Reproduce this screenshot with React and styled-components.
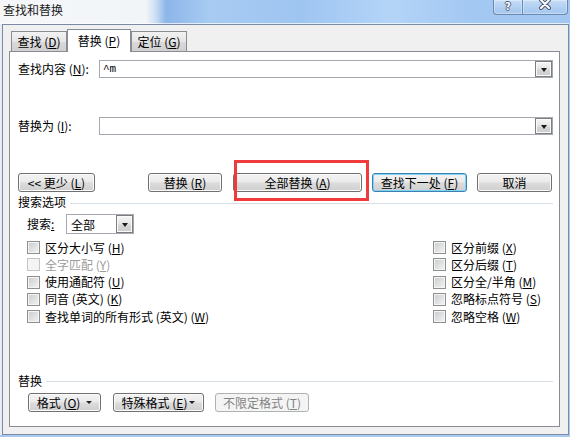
import React from 'react'
import styled, { createGlobalStyle } from 'styled-components'

const GlobalStyle = createGlobalStyle`
  html, body { margin: 0; padding: 0; }
  body {
    background: #a9c9ee;
    font-family: "Noto Sans CJK SC", "Liberation Sans", sans-serif;
    font-size: 12px;
    color: #000;
  }
  u { text-decoration: underline; text-underline-offset: 1px; }
`

const Window = styled.div`
  width: 570px;
  height: 437px;
  overflow: hidden;
  display: flex;
  flex-direction: column;
  background: #a9c9ee;
`

const TitleBar = styled.div`
  height: 24px;
  flex: none;
  display: flex;
  justify-content: space-between;
  align-items: flex-start;
  background: linear-gradient(to right,
    #f5f7f9 0, #f2f5f8 146px, #c9ddf4 156px, #8db6e9 166px, #93bbeb 178px,
    #a8cbf2 210px, #9ec5f1 300px, #b4d4f7 390px, #a3c8f2 470px, #a2c7f1 570px);
`

const Title = styled.div`
  padding: 3px 0 0 3px;
  font-size: 12px;
  line-height: 14px;
  color: #1a1a1a;
`

const Captions = styled.div`
  display: flex;
  margin-right: 2px;
`

const CaptionButton = styled.div`
  box-sizing: border-box;
  width: ${p => p.$w}px;
  height: 15px;
  margin-left: ${p => p.$ml || 0}px;
  border: 1px solid #6a88b0;
  border-top: none;
  border-radius: ${p => p.$r};
  background: linear-gradient(#c6ddf7, #afcdf1 60%, #a6c7ef);
  box-shadow: inset 0 0 0 1px rgba(255, 255, 255, 0.35);
  display: flex;
  justify-content: center;
  align-items: flex-start;
`

const Help = styled.span`
  font-family: "DejaVu Sans", sans-serif;
  font-weight: bold;
  font-size: 10px;
  line-height: 11px;
  margin-top: 1px;
  color: #fff;
  text-shadow: 1px 0 0 #4d5d73, -1px 0 0 #4d5d73, 0 1px 0 #4d5d73, 0 -1px 0 #4d5d73;
`

const Body = styled.div`
  flex: 1;
  margin: 0 1px 2px 2px;
  border: 1px solid #7b8ba3;
  box-shadow: -2px 0 0 #e8edf3, 0 -1px 0 rgba(255, 255, 255, 0.7);
  background: #f0f0f0;
  padding: 4px 8px 7px 6px;
  display: flex;
  flex-direction: column;
`

const TabStrip = styled.div`
  height: 22px;
  flex: none;
  padding-left: 2px;
  display: flex;
  align-items: flex-end;
`

const Tab = styled.div`
  box-sizing: border-box;
  width: ${p => p.$w}px;
  height: ${p => (p.$active ? 23 : 20)}px;
  margin-bottom: ${p => (p.$active ? -1 : 0)}px;
  position: relative;
  z-index: ${p => (p.$active ? 1 : 0)};
  border: 1px solid #898c95;
  border-bottom: none;
  background: ${p => (p.$active ? '#fff' : 'linear-gradient(#f2f2f2, #e6e6e6 50%, #d9d9d9 55%, #d0d0d0)')};
  display: flex;
  justify-content: center;
  padding-top: ${p => (p.$active ? 3 : 2)}px;
  line-height: 16px;
`

const Panel = styled.div`
  flex: 1;
  border: 1px solid #898c95;
  background: #fff;
  padding: 8px 6px 14px 8px;
  display: flex;
  flex-direction: column;
`

const FieldRow = styled.div`
  display: flex;
  align-items: center;
  height: 18px;
  margin-top: ${p => p.$mt || 0}px;
`

const Label = styled.div`
  width: ${p => p.$w}px;
  flex: none;
  line-height: 16px;
`

const Combo = styled.div`
  box-sizing: border-box;
  flex: ${p => (p.$w ? 'none' : 1)};
  width: ${p => (p.$w ? `${p.$w}px` : 'auto')};
  height: ${p => p.$h || 18}px;
  border: 1px solid #a5a9b0;
  background: #fff;
  display: flex;
  align-items: stretch;
`

const ComboText = styled.div`
  flex: 1;
  padding-left: ${p => p.$pl || 3}px;
  display: flex;
  align-items: center;
  font-family: ${p => (p.$mono ? '"Liberation Mono", monospace' : 'inherit')};
  font-size: ${p => (p.$mono ? 11 : 12)}px;
`

const DropButton = styled.div`
  box-sizing: border-box;
  width: 17px;
  flex: none;
  border: 1px solid #7e7e7e;
  background: linear-gradient(#f6f6f6, #e4e4e4 50%, #d6d6d6 55%, #cdcdcd);
  box-shadow: inset 0 0 0 1px #fbfbfb;
  display: flex;
  align-items: center;
  justify-content: center;
  &::after {
    content: '';
    border-left: 3.5px solid transparent;
    border-right: 3.5px solid transparent;
    border-top: 4px solid #1a1a1a;
    margin-top: 1px;
  }
`

const ButtonRow = styled.div`
  display: flex;
  align-items: center;
  height: 19px;
  flex: none;
  margin-top: ${p => p.$mt || 0}px;
  padding-left: ${p => p.$pl || 0}px;
`

const Button = styled.button`
  box-sizing: border-box;
  width: ${p => p.$w}px;
  height: 19px;
  padding: 0;
  margin: 0 0 0 ${p => p.$ml || 0}px;
  font: inherit;
  font-size: 12px;
  line-height: 16px;
  color: #000;
  border: 1px solid ${p => (p.$default ? '#3c7fb1' : '#707070')};
  border-radius: 3px;
  background: linear-gradient(#f3f3f3, #ebebeb 45%, #dcdcdc 52%, #cfcfcf);
  box-shadow: inset 0 0 0 1px ${p => (p.$default ? '#7fd3f4' : '#fbfbfb')};
  display: flex;
  align-items: center;
  justify-content: center;
  &:disabled {
    border-color: #adb2b5;
    background: #f4f4f4;
    color: #838383;
    box-shadow: none;
  }
`

const Caret = styled.span`
  display: inline-block;
  margin-left: ${p => p.$ml}px;
  border-left: 3px solid transparent;
  border-right: 3px solid transparent;
  border-top: 3px solid #222;
`

const Marked = styled.div`
  position: relative;
  flex: none;
  margin-left: ${p => p.$ml || 0}px;
`

const Highlight = styled.div`
  position: absolute;
  left: 1px;
  top: -13px;
  width: 135px;
  height: 41px;
  box-sizing: border-box;
  border: 3px solid #ef3b3b;
  pointer-events: none;
`

const SectionHead = styled.div`
  display: flex;
  align-items: center;
  height: 18px;
  flex: none;
  margin-top: ${p => p.$mt || 0};
  margin-bottom: ${p => p.$mb || 0}px;
  line-height: 16px;
  &::after {
    content: '';
    flex: 1;
    height: 1px;
    margin-left: 4px;
    margin-top: ${p => p.$lineOffset || 0}px;
    background: #d5dfe5;
  }
`

const SearchRow = styled.div`
  display: flex;
  align-items: center;
  height: 20px;
  margin-top: 3px;
  padding-left: 9px;
`

const CheckGrid = styled.div`
  display: grid;
  grid-template-columns: 406px 1fr;
  grid-template-rows: repeat(5, 17.25px);
  grid-auto-flow: column;
  margin-top: 5px;
  padding-left: 9px;
`

const Check = styled.div`
  display: flex;
  align-items: center;
  color: ${p => (p.$disabled ? '#9c9c9c' : '#000')};
  line-height: 16px;
  white-space: pre;
  &::before {
    content: '';
    box-sizing: border-box;
    width: 13px;
    height: 13px;
    flex: none;
    margin-right: 5px;
    border: 1px solid ${p => (p.$disabled ? '#c5c5c5' : '#8e8f8f')};
    background: ${p => (p.$disabled ? '#f4f4f4' : 'linear-gradient(135deg, #c9cbce, #f4f4f4)')};
    box-shadow: inset 0 0 0 1px #f4f4f4;
  }
`

const leftChecks = [
  ['区分大小写', 'H'],
  ['全字匹配', 'Y', true],
  ['使用通配符', 'U'],
  ['同音 (英文)', 'K'],
  ['查找单词的所有形式 (英文)', 'W'],
]

const rightChecks = [
  ['区分前缀', 'X'],
  ['区分后缀', 'T'],
  ['区分全/半角', 'M'],
  ['忽略标点符号', 'S'],
  ['忽略空格', 'W'],
]

const Key = ({ k }) => (
  <> (<u>{k}</u>)</>
)

export default function App() {
  return (
    <Window>
      <GlobalStyle />
      <TitleBar>
        <Title>查找和替换</Title>
        <Captions>
          <CaptionButton $w={30} $r="0 0 0 4px">
            <Help>?</Help>
          </CaptionButton>
          <CaptionButton $w={46} $ml={-1} $r="0 0 4px 0">
            <svg width="12" height="11" viewBox="0 0 12 11">
              <path d="M2 0 L10 8 M10 0 L2 8" stroke="#4d5d73" strokeWidth="4" strokeLinecap="round" />
              <path d="M2 0 L10 8 M10 0 L2 8" stroke="#fff" strokeWidth="2" strokeLinecap="round" />
            </svg>
          </CaptionButton>
        </Captions>
      </TitleBar>

      <Body>
        <TabStrip>
          <Tab $w={56}>查找<Key k="D" /></Tab>
          <Tab $w={64} $active>替换<Key k="P" /></Tab>
          <Tab $w={56}>定位<Key k="G" /></Tab>
        </TabStrip>

        <Panel>
          <FieldRow>
            <Label $w={81}>查找内容<Key k="N" />:</Label>
            <Combo>
              <ComboText $mono>^m</ComboText>
              <DropButton />
            </Combo>
          </FieldRow>
          <FieldRow $mt={39}>
            <Label $w={81}>替换为<Key k="I" />:</Label>
            <Combo>
              <ComboText />
              <DropButton />
            </Combo>
          </FieldRow>

          <ButtonRow $mt={38}>
            <Button $w={77}>&lt;&lt; 更少<Key k="L" /></Button>
            <Button $w={74} $ml={53}>替换<Key k="R" /></Button>
            <Marked $ml={11}>
              <Button $w={129}>全部替换<Key k="A" /></Button>
              <Highlight />
            </Marked>
            <Button $w={95} $ml={10} $default>查找下一处<Key k="F" /></Button>
            <Button $w={75} $ml={10}>取消</Button>
          </ButtonRow>

          <SectionHead $mt="1px" $lineOffset={3}>搜索选项</SectionHead>
          <SearchRow>
            <Label $w={39}>搜索<u>:</u></Label>
            <Combo $w={68} $h={20}>
              <ComboText $pl={4}>全部</ComboText>
              <DropButton />
            </Combo>
          </SearchRow>

          <CheckGrid>
            {leftChecks.map(([text, k, off]) => (
              <Check key={text} $disabled={off}>{text}<Key k={k} /></Check>
            ))}
            {rightChecks.map(([text, k]) => (
              <Check key={text}>{text}<Key k={k} /></Check>
            ))}
          </CheckGrid>

          <SectionHead $mt="auto" $mb={3}>替换</SectionHead>
          <ButtonRow $pl={10}>
            <Button $w={73}>格式<Key k="O" /><Caret $ml={6} /></Button>
            <Button $w={91} $ml={12}>特殊格式<Key k="E" /><Caret $ml={2} /></Button>
            <Button $w={94} $ml={11} disabled>不限定格式<Key k="T" /></Button>
          </ButtonRow>
        </Panel>
      </Body>
    </Window>
  )
}
